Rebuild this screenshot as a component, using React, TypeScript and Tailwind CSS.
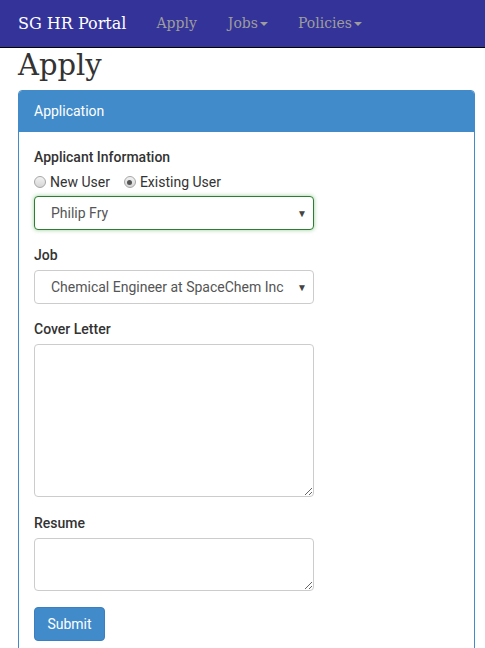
import React from 'react';

const slab = { fontFamily: '"DejaVu Serif", "Liberation Serif", serif' };

function Caret() {
  return <span className="inline-block ml-[2px] align-middle border-t-[4px] border-x-[4px] border-x-transparent border-t-[#9d9d9d]" />;
}

function Radio({ checked }: { checked?: boolean }) {
  return (
    <span className="inline-flex w-[12px] h-[12px] rounded-full border border-[#a6a6a6] bg-gradient-to-b from-[#f2f2f2] to-[#d6d6d6] items-center justify-center">
      {checked && <span className="w-[5px] h-[5px] rounded-full bg-[#555]" />}
    </span>
  );
}

function SelectBox({ value, focused }: { value: string; focused?: boolean }) {
  return (
    <div
      className={`w-[280px] h-[34px] rounded-[4px] border flex items-center pl-[16px] pr-[6px] text-[14px] text-[#555] bg-white ${
        focused ? 'border-[#2e7d32] shadow-[0_0_4px_rgba(76,175,80,0.6)]' : 'border-[#ccc]'
      }`}
    >
      <span className="w-[233px] whitespace-nowrap overflow-hidden">{value}</span>
      <span className="ml-auto text-[10px] text-[#444]">▼</span>
    </div>
  );
}

export default function App() {
  return (
    <div className="min-h-screen bg-white text-[#333]" style={{ fontFamily: 'Roboto, "Liberation Sans", sans-serif' }}>
      <nav className="h-[48px] bg-[#343399] border-b border-black flex items-center px-[18px]" style={slab}>
        <span className="text-[16px] text-white mr-[30px]">SG HR Portal</span>
        <span className="text-[14px] text-[#9d9d9d] mr-[31px]">Apply</span>
        <span className="text-[14px] text-[#9d9d9d] mr-[30px]">Jobs<Caret /></span>
        <span className="text-[14px] text-[#9d9d9d]">Policies<Caret /></span>
      </nav>

      <div className="px-[18px] pr-[10px]">
        <h1 className="text-[29px] leading-[34px] mt-[0px] mb-[8px]" style={slab}>Apply</h1>

        <div className="border border-[#428bca] rounded-[4px]">
          <div className="bg-[#428bca] h-[41px] flex items-center px-[15px] text-white text-[14px] rounded-t-[3px]">
            Application
          </div>
          <div className="px-[15px] pt-[15px] pb-[20px]">
            <div className="text-[14px] leading-[20px] font-medium mb-[5px]">Applicant Information</div>
            <div className="flex items-center h-[20px] gap-[4px] text-[14px] mb-[4px]">
              <Radio />
              <span className="mr-[10px]">New User</span>
              <Radio checked />
              <span>Existing User</span>
            </div>
            <SelectBox value="Philip Fry" focused />

            <div className="text-[14px] leading-[20px] font-medium mt-[15px] mb-[5px]">Job</div>
            <SelectBox value="Chemical Engineer at SpaceChem Inc" />

            <div className="text-[14px] leading-[20px] font-medium mt-[15px] mb-[5px]">Cover Letter</div>
            <textarea className="block w-[280px] h-[153px] rounded-[4px] border border-[#ccc] outline-none" />

            <div className="text-[14px] leading-[20px] font-medium mt-[16px] mb-[5px]">Resume</div>
            <textarea className="block w-[280px] h-[53px] rounded-[4px] border border-[#ccc] outline-none" />

            <button className="mt-[16px] w-[71px] h-[34px] rounded-[4px] bg-[#428bca] border border-[#3b7fc0] text-white text-[14px]">
              Submit
            </button>
          </div>
        </div>
      </div>
    </div>
  );
}
